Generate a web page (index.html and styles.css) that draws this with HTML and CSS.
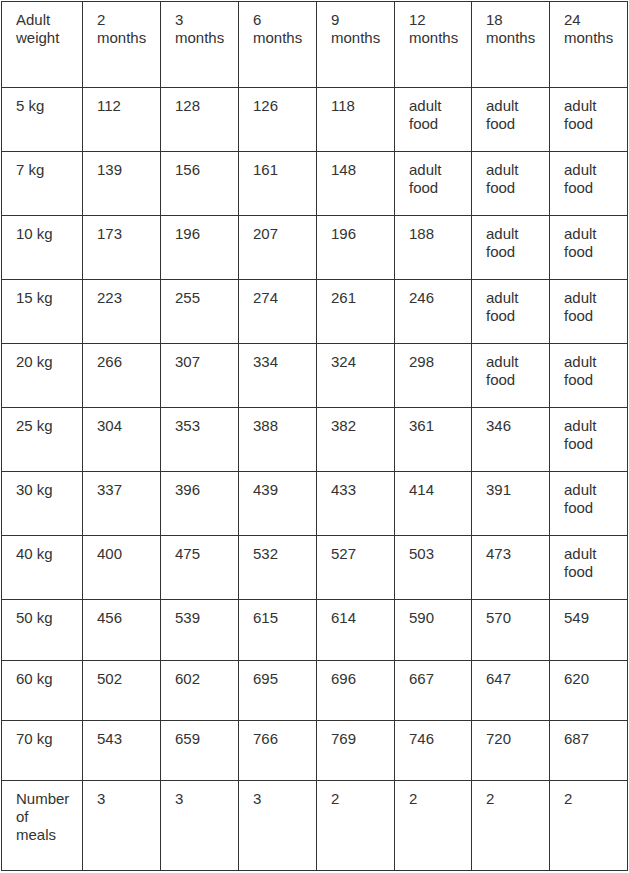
FILE: index.html
```html
<!DOCTYPE html>
<html>
<head>
<meta charset="utf-8">
<link rel="stylesheet" href="styles.css">
</head>
<body>
<table class="feed">
  <colgroup>
    <col class="c-first"><col class="c"><col class="c"><col class="c"><col class="c"><col class="c-narrow"><col class="c"><col class="c">
  </colgroup>
  <tr class="r-head"><td>Adult<br>weight</td><td>2<br>months</td><td>3<br>months</td><td>6<br>months</td><td>9<br>months</td><td>12<br>months</td><td>18<br>months</td><td>24<br>months</td></tr>
  <tr class="r-64"><td>5 kg</td><td>112</td><td>128</td><td>126</td><td>118</td><td>adult<br>food</td><td>adult<br>food</td><td>adult<br>food</td></tr>
  <tr class="r-64"><td>7 kg</td><td>139</td><td>156</td><td>161</td><td>148</td><td>adult<br>food</td><td>adult<br>food</td><td>adult<br>food</td></tr>
  <tr class="r-64"><td>10 kg</td><td>173</td><td>196</td><td>207</td><td>196</td><td>188</td><td>adult<br>food</td><td>adult<br>food</td></tr>
  <tr class="r-64"><td>15 kg</td><td>223</td><td>255</td><td>274</td><td>261</td><td>246</td><td>adult<br>food</td><td>adult<br>food</td></tr>
  <tr class="r-64"><td>20 kg</td><td>266</td><td>307</td><td>334</td><td>324</td><td>298</td><td>adult<br>food</td><td>adult<br>food</td></tr>
  <tr class="r-64"><td>25 kg</td><td>304</td><td>353</td><td>388</td><td>382</td><td>361</td><td>346</td><td>adult<br>food</td></tr>
  <tr class="r-64"><td>30 kg</td><td>337</td><td>396</td><td>439</td><td>433</td><td>414</td><td>391</td><td>adult<br>food</td></tr>
  <tr class="r-64"><td>40 kg</td><td>400</td><td>475</td><td>532</td><td>527</td><td>503</td><td>473</td><td>adult<br>food</td></tr>
  <tr class="r-61"><td>50 kg</td><td>456</td><td>539</td><td>615</td><td>614</td><td>590</td><td>570</td><td>549</td></tr>
  <tr class="r-60"><td>60 kg</td><td>502</td><td>602</td><td>695</td><td>696</td><td>667</td><td>647</td><td>620</td></tr>
  <tr class="r-60"><td>70 kg</td><td>543</td><td>659</td><td>766</td><td>769</td><td>746</td><td>720</td><td>687</td></tr>
  <tr class="r-last"><td>Number<br>of<br>meals</td><td>3</td><td>3</td><td>3</td><td>2</td><td>2</td><td>2</td><td>2</td></tr>
</table>
</body>
</html>
```
FILE: styles.css
```css
html, body {
  margin: 0;
  padding: 0;
  background: #fff;
}
body {
  padding: 1px 0 0 1px;
}
.feed {
  border-collapse: collapse;
  table-layout: fixed;
  width: 627px;
  font-family: "Liberation Sans", Arial, sans-serif;
  font-size: 15px;
  line-height: 18px;
  color: #333;
}
.c-first { width: 81px; }
.c { width: 78px; }
.c-narrow { width: 77px; }
.feed td {
  border: 1px solid #333;
  padding: 9px 10px 0 14px;
  vertical-align: top;
  box-sizing: border-box;
}
.r-head td { height: 86px; }
.r-64 td { height: 64px; }
.r-61 td { height: 61px; }
.r-60 td { height: 60px; }
.r-last td { height: 90px; }
```
